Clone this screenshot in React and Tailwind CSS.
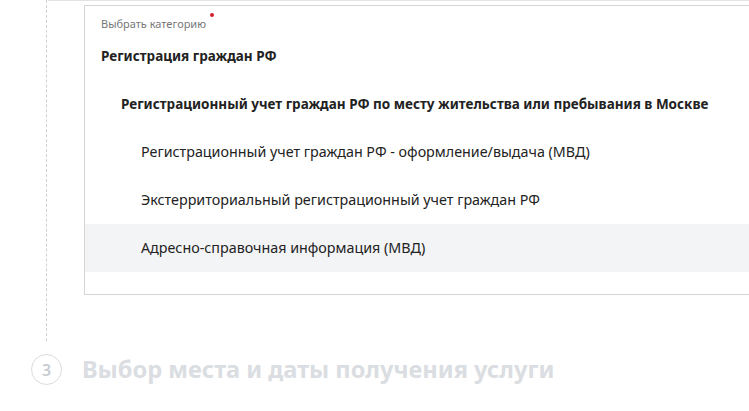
export default function App() {
  const font = { fontFamily: '"Noto Sans", "Open Sans", sans-serif' };
  return (
    <div className="relative w-[749px] h-[411px] bg-white overflow-hidden" style={font}>
      <div className="h-px bg-[#e3e3e3] ml-[48px]" />
      <div className="flex">
        <div className="w-[47px] shrink-0 flex justify-end">
          <div className="w-0 h-[341px] border-l border-dashed border-[#d0d0d0] -mt-px" />
        </div>
        <div className="w-[37px] shrink-0" />
        <div className="flex-1">
          <div className="mt-[4px] w-[700px] h-[290px] border border-[#d5d5d5] text-[#222]">
            <div className="h-[26px] flex items-start pt-[12px] pl-[16px]">
              <span className="text-[11px] text-[#777] leading-none relative">
                Выбрать категорию
                <span className="absolute -right-[8px] -top-[5px] w-[4px] h-[4px] rounded-full bg-[#d0202b]" />
              </span>
            </div>
            <div className="h-[48px] flex items-center pl-[16px] text-[13.5px] font-bold">Регистрация граждан РФ</div>
            <div className="h-[48px] flex items-center pl-[36px] text-[13.5px] font-bold">Регистрационный учет граждан РФ по месту жительства или пребывания в Москве</div>
            <div className="h-[48px] flex items-center pl-[56px] text-[14.3px]">Регистрационный учет граждан РФ - оформление/выдача (МВД)</div>
            <div className="h-[48px] flex items-center pl-[56px] text-[14.3px]">Экстерриториальный регистрационный учет граждан РФ</div>
            <div className="h-[48px] flex items-center pl-[56px] text-[14.3px] bg-[#f3f4f6]">Адресно-справочная информация (МВД)</div>
          </div>
        </div>
      </div>
      <div className="flex items-center mt-[13px] ml-[31px]">
        <div className="w-[31px] h-[31px] rounded-full border-[1.5px] border-[#d8dbdf] flex items-center justify-center text-[16px] text-[#c8ccd1] font-semibold">3</div>
        <div className="ml-[20px] text-[23.6px] font-bold text-[#dadde1] leading-none">Выбор места и даты получения услуги</div>
      </div>
    </div>
  );
}
